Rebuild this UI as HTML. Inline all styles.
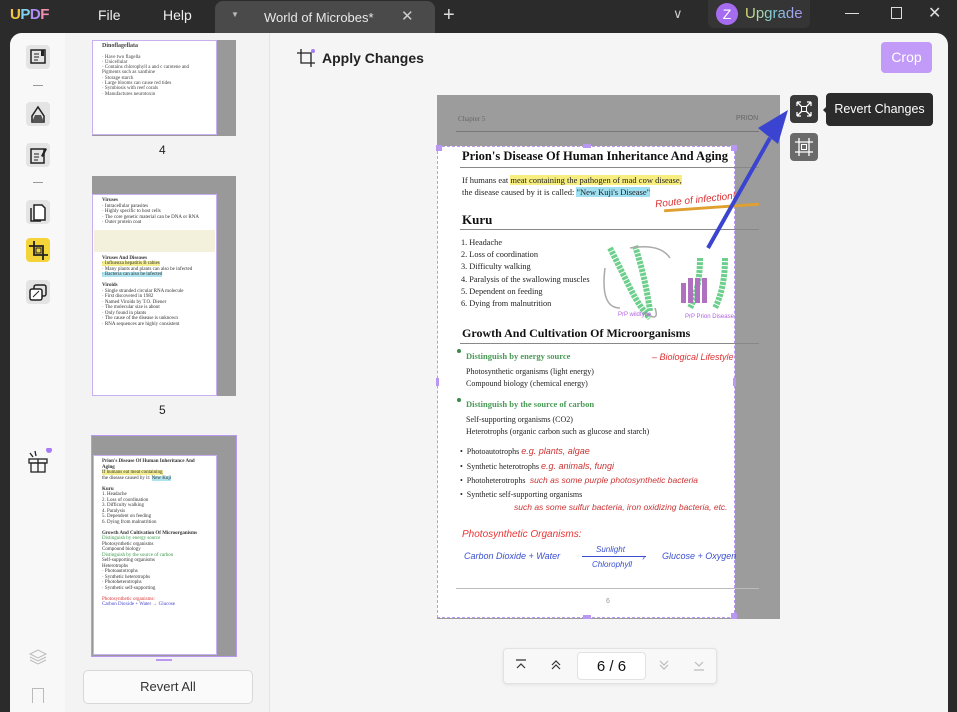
<!DOCTYPE html>
<html><head><meta charset="utf-8">
<style>
*{margin:0;padding:0;box-sizing:border-box}
body{width:957px;height:712px;background:#2b2b2b;font-family:"Liberation Sans",sans-serif;position:relative;overflow:hidden}
.a{position:absolute}
.ser{font-family:"Liberation Serif",serif}
.hw{font-family:"Liberation Sans",sans-serif;font-style:italic}
.ic{position:absolute;left:26px;width:24px;height:24px;border-radius:4px;background:#e4e4e4}
.pl{position:absolute;left:466px;font-size:8px;color:#222}
</style></head><body>
<div class="a" style="left:10px;top:6px;font-weight:bold;font-size:15px;letter-spacing:-0.5px"><span style="color:#f5c542">U</span><span style="color:#7fd3f0">P</span><span style="color:#b08cf5">D</span><span style="color:#f08fb0">F</span></div>
<div class="a" style="left:98px;top:7px;color:#eee;font-size:14px">File</div>
<div class="a" style="left:163px;top:7px;color:#eee;font-size:14px">Help</div>
<div class="a" style="left:215px;top:1px;width:220px;height:32px;background:#4a4a4a;border-radius:8px 8px 0 0"></div>
<div class="a" style="left:231px;top:10px;color:#bbb;font-size:8px">▼</div>
<div class="a" style="left:264px;top:10px;color:#e8e8e8;font-size:13px">World of Microbes*</div>
<div class="a" style="left:401px;top:7px;color:#ccc;font-size:15px">✕</div>
<div class="a" style="left:443px;top:4px;color:#ddd;font-size:20px">+</div>
<div class="a" style="left:673px;top:6px;color:#ccc;font-size:13px">∨</div>
<div class="a" style="left:708px;top:0;width:102px;height:28px;background:#353535;border-radius:0 0 6px 6px"></div>
<div class="a" style="left:716px;top:3px;width:22px;height:22px;border-radius:50%;background:#a66cf0;color:#fff;font-size:14px;text-align:center;line-height:22px">Z</div>
<div class="a" style="left:745px;top:5px;font-size:15px;background:linear-gradient(90deg,#d8e070,#80d0e0,#b090f0);-webkit-background-clip:text;color:transparent">Upgrade</div>
<div class="a" style="left:845px;top:13px;width:14px;height:1px;background:#ddd"></div>
<div class="a" style="left:891px;top:7px;width:11px;height:12px;border:1px solid #ddd"></div>
<div class="a" style="left:928px;top:3px;color:#ddd;font-size:16px">✕</div>
<div class="a" style="left:10px;top:33px;width:938px;height:679px;background:#f5f5f5;border-radius:12px 12px 0 0;overflow:hidden">
 <div class="a" style="left:0;top:0;width:55px;height:679px;background:#f8f8f8"></div>
 <div class="a" style="left:55px;top:0;width:205px;height:679px;background:#f3f3f3;border-right:1px solid #e4e4e4"></div>
</div>
<div class="ic" style="top:45px"><svg width="24" height="24"><rect x="5" y="5" width="14" height="13" fill="none" stroke="#222" stroke-width="1.5"/><path d="M8 9h5M8 12h5M8 15h4" stroke="#222"/><rect x="15" y="5" width="3" height="6" fill="#222"/></svg></div>
<div class="a" style="left:33px;top:85px;width:10px;height:1px;background:#999"></div>
<div class="ic" style="top:102px"><svg width="24" height="24"><path d="M6 20V14l6-9 6 9v6z" fill="none" stroke="#222" stroke-width="1.5"/><path d="M9 13h6l3 7H6z" fill="#555"/></svg></div>
<div class="ic" style="top:143px"><svg width="24" height="24"><rect x="5" y="6" width="13" height="14" fill="none" stroke="#222" stroke-width="1.5"/><path d="M8 11h5M8 14h5M8 17h4" stroke="#222"/><path d="M15 13l4-8 2 1-4 8z" fill="#222"/></svg></div>
<div class="a" style="left:33px;top:182px;width:10px;height:1px;background:#999"></div>
<div class="ic" style="top:200px"><svg width="24" height="24"><path d="M8 5h8l3 3v12H8z" fill="#fff" stroke="#222" stroke-width="1.5"/><path d="M5 8v13h10" fill="none" stroke="#222" stroke-width="1.5"/></svg></div>
<div class="ic" style="top:238px;background:#f5d43a"><svg width="24" height="24"><path d="M8 3v14h14M3 8h14v14" fill="none" stroke="#222" stroke-width="1.8"/><rect x="10" y="10" width="5" height="5" fill="none" stroke="#222"/></svg></div>
<div class="ic" style="top:280px"><svg width="24" height="24"><rect x="8" y="5" width="12" height="11" rx="2" fill="none" stroke="#222" stroke-width="1.5"/><rect x="4" y="9" width="12" height="11" rx="2" fill="#fff" stroke="#222" stroke-width="1.5"/><path d="M7 17l6-6" stroke="#222"/></svg></div>
<div class="a" style="left:26px;top:448px"><svg width="26" height="26"><rect x="3" y="11" width="18" height="4" fill="none" stroke="#222" stroke-width="1.3"/><rect x="5" y="15" width="14" height="9" fill="none" stroke="#222" stroke-width="1.3"/><path d="M12 11v13M4 5l3 4M9 3l1 5" stroke="#222" stroke-width="1.3"/><circle cx="23" cy="2" r="3" fill="#a87cf5"/></svg></div>
<div class="a" style="left:28px;top:646px"><svg width="20" height="20"><path d="M2 8l8-4 8 4-8 4z M2 11l8 4 8-4 M2 14l8 4 8-4" fill="none" stroke="#bbb"/></svg></div>
<div class="a" style="left:32px;top:688px;width:12px;height:15px;border:1.3px solid #bbb;border-bottom:none"></div>
<div class="a" style="left:92px;top:40px;width:144px;height:96px;background:#999"></div>
<div class="a ser" style="left:92px;top:40px;width:125px;height:95px;background:#fff;border:1px solid #c8b0f0;padding:3px 9px;font-size:5px;color:#444;line-height:5.3px"><b style="font-size:6px">Dinoflagellata</b><br><br>· Have two flagella<br>· Unicellular<br>· Contains chlorophyll a and c carotene and Pigments such as xanthine<br>· Storage starch<br>· Large blooms can cause red tides<br>· Symbiosis with reef corals<br>· Manufactures neurotoxin</div>
<div class="a" style="left:159px;top:143px;font-size:12px;color:#222">4</div>
<div class="a" style="left:92px;top:176px;width:144px;height:220px;background:#999"></div>
<div class="a ser" style="left:92px;top:194px;width:125px;height:202px;background:#fff;border:1px solid #c8b0f0;font-size:5px;color:#333;padding:3px 9px;line-height:5.5px"><b>Viruses</b><br>· Intracellular parasites<br>· Highly specific to host cells<br>· The core genetic material can be DNA or RNA<br>· Outer protein coat<div style="height:22px;background:#f3f0dc;margin:4px -8px"></div><b>Viruses And Diseases</b><br><span style="background:#f4ee90">· Influenza hepatitis B rabies</span><br>· Many plants and plants can also be infected<br><span style="background:#aee4f0">· Bacteria can also be infected</span><br><br><b>Viroids</b><br>· Single stranded circular RNA molecule<br>· First discovered in 1982<br>· Named Viroids by T.O. Diener<br>· The molecular size is about<br>· Only found in plants<br>· The cause of the disease is unknown<br>· RNA sequences are highly consistent</div>
<div class="a" style="left:159px;top:403px;font-size:12px;color:#222">5</div>
<div class="a" style="left:91px;top:435px;width:146px;height:222px;background:#999;border:1px solid #b898f0"></div>
<div class="a ser" style="left:93px;top:455px;width:124px;height:200px;background:#fff;border:1px solid #c8b0f0;font-size:5px;color:#333;padding:3px 8px;line-height:5.5px"><b>Prion's Disease Of Human Inheritance And Aging</b><br><span style="background:#f4ee90">If humans eat meat containing</span><br>the disease caused by it: <span style="background:#aee4f0">New Kuji</span><br><br><b>Kuru</b><br>1. Headache<br>2. Loss of coordination<br>3. Difficulty walking<br>4. Paralysis<br>5. Dependent on feeding<br>6. Dying from malnutrition<br><br><b>Growth And Cultivation Of Microorganisms</b><br><span style="color:#3a9a4a">Distinguish by energy source</span><br>Photosynthetic organisms<br>Compound biology<br><span style="color:#3a9a4a">Distinguish by the source of carbon</span><br>Self-supporting organisms<br>Heterotrophs<br>· Photoautotrophs<br>· Synthetic heterotrophs<br>· Photoheterotrophs<br>· Synthetic self-supporting<br><br><span style="color:#d33">Photosynthetic organisms:</span><br><span style="color:#44c">Carbon Dioxide + Water → Glucose</span></div>
<div class="a" style="left:156px;top:659px;width:16px;height:2px;background:#b898f0"></div>
<div class="a" style="left:83px;top:670px;width:170px;height:34px;background:#fafafa;border:1px solid #d8d8d8;border-radius:5px;font-size:13px;color:#333;text-align:center;line-height:32px">Revert All</div>
<div class="a" style="left:296px;top:48px"><svg width="20" height="20"><path d="M5 1v14h14M1 5h14v14" fill="none" stroke="#222" stroke-width="1.3"/><circle cx="17" cy="3" r="2" fill="#a87cf5"/></svg></div>
<div class="a" style="left:322px;top:50px;font-size:14px;font-weight:bold;color:#222">Apply Changes</div>
<div class="a" style="left:881px;top:42px;width:51px;height:31px;background:#c29af8;border-radius:4px;color:#fff;font-size:14px;text-align:center;line-height:31px">Crop</div>
<div class="a" style="left:437px;top:95px;width:343px;height:524px;background:#9c9c9c"></div>
<div class="a ser" style="left:458px;top:115px;font-size:7px;color:#666">Chapter 5</div>
<div class="a" style="left:736px;top:115px;font-size:7px;color:#666">PRION</div>
<div class="a" style="left:456px;top:131px;width:303px;height:1px;background:#777"></div>
<div class="a" style="left:437px;top:146px;width:298px;height:472px;background:#fff;border:1.5px dashed #b898f0"></div>
<div class="a ser" style="left:462px;top:149px;font-size:12.5px;font-weight:bold;color:#111">Prion's Disease Of Human Inheritance And Aging</div>
<div class="a" style="left:460px;top:167px;width:299px;height:1px;background:#888"></div>
<div class="a ser" style="left:462px;top:175px;font-size:8.5px;color:#222">If humans eat <span style="background:#f8ee80">meat containing the pathogen of mad cow disease,</span></div>
<div class="a ser" style="left:462px;top:187px;font-size:8.5px;color:#222">the disease caused by it is called: <span style="background:#9ee0f2">"New Kuji's Disease"</span></div>
<div class="a hw" style="left:655px;top:195px;font-size:10px;color:#d33;transform:rotate(-6deg)">Route of infection!</div>
<div class="a" style="left:664px;top:206px;width:95px;height:3px;background:#e0a030;transform:rotate(-4deg)"></div>
<div class="a ser" style="left:462px;top:212px;font-size:13px;font-weight:bold;color:#111">Kuru</div>
<div class="a" style="left:460px;top:229px;width:299px;height:1px;background:#888"></div>
<div class="a ser" style="left:461px;top:237px;font-size:8.3px;color:#222;line-height:12.2px">1. Headache<br>2. Loss of coordination<br>3. Difficulty walking<br>4. Paralysis of the swallowing muscles<br>5. Dependent on feeding<br>6. Dying from malnutrition</div>
<svg class="a" style="left:600px;top:238px" width="135" height="85"><g fill="none" stroke-width="6" stroke="#6ccf8c" stroke-dasharray="3 1"><path d="M10 10 q10 20 20 40 q10 20 20 30"/><path d="M35 8 q10 30 15 65"/><path d="M100 20 q0 30 -10 50"/><path d="M125 20 q0 30 -10 50"/></g><g fill="none" stroke="#aaa" stroke-width="1.5"><path d="M5 30 q-5 40 15 40 M30 10 q30 -5 40 10 M55 70 q5 15 -10 5"/></g><g fill="#b070c0"><rect x="88" y="40" width="5" height="25"/><rect x="95" y="40" width="5" height="25"/><rect x="102" y="40" width="5" height="25"/><rect x="81" y="45" width="5" height="20"/></g><text x="18" y="78" font-size="6" fill="#b060e0" font-family="Liberation Sans">PrP wildtype</text><text x="85" y="80" font-size="6" fill="#b060e0" font-family="Liberation Sans">PrP Prion Disease</text></svg>
<div class="a ser" style="left:462px;top:326px;font-size:12px;font-weight:bold;color:#111">Growth And Cultivation Of Microorganisms</div>
<div class="a" style="left:460px;top:343px;width:299px;height:1px;background:#888"></div>
<div class="a" style="left:457px;top:349px;width:4px;height:4px;border-radius:50%;background:#3a8a4a"></div>
<div class="a ser" style="left:466px;top:351px;font-size:8.5px;font-weight:bold;color:#4a9a55">Distinguish by energy source</div>
<div class="a hw" style="left:652px;top:352px;font-size:9px;color:#d33">– Biological Lifestyle</div>
<div class="pl ser" style="top:367px">Photosynthetic organisms (light energy)</div>
<div class="pl ser" style="top:379px">Compound biology (chemical energy)</div>
<div class="a" style="left:457px;top:398px;width:4px;height:4px;border-radius:50%;background:#3a8a4a"></div>
<div class="a ser" style="left:466px;top:399px;font-size:8.5px;font-weight:bold;color:#4a9a55">Distinguish by the source of carbon</div>
<div class="pl ser" style="top:415px">Self-supporting organisms (CO2)</div>
<div class="pl ser" style="top:427px">Heterotrophs (organic carbon such as glucose and starch)</div>
<div class="pl ser" style="left:460px;top:446px">•&nbsp; Photoautotrophs <span class="hw" style="color:#c33;font-size:9px">e.g. plants, algae</span></div>
<div class="pl ser" style="left:460px;top:461px">•&nbsp; Synthetic heterotrophs <span class="hw" style="color:#c33;font-size:9px">e.g. animals, fungi</span></div>
<div class="pl ser" style="left:460px;top:475px">•&nbsp; Photoheterotrophs <span class="hw" style="color:#c33;font-size:8.5px">&nbsp;such as some purple photosynthetic bacteria</span></div>
<div class="pl ser" style="left:460px;top:490px">•&nbsp; Synthetic self-supporting organisms</div>
<div class="a hw" style="left:514px;top:502px;font-size:8.5px;color:#c33">such as some sulfur bacteria, iron oxidizing bacteria, etc.</div>
<div class="a hw" style="left:462px;top:529px;font-size:10px;color:#e33">Photosynthetic Organisms:</div>
<div class="a hw" style="left:464px;top:551px;font-size:9px;color:#3a50d0">Carbon Dioxide + Water</div>
<div class="a hw" style="left:596px;top:545px;font-size:8px;color:#3a50d0">Sunlight</div>
<div class="a" style="left:582px;top:556px;width:64px;height:1px;background:#3a50d0"></div>
<div class="a" style="left:642px;top:552px;font-size:9px;color:#3a50d0">›</div>
<div class="a hw" style="left:592px;top:560px;font-size:8px;color:#3a50d0">Chlorophyll</div>
<div class="a hw" style="left:662px;top:551px;font-size:9px;color:#3a50d0">Glucose + Oxygen</div>
<div class="a" style="left:456px;top:588px;width:303px;height:1px;background:#bbb"></div>
<div class="a" style="left:606px;top:598px;font-size:7px;color:#999">6</div>
<div class="a" style="left:436px;top:145px;width:6px;height:6px;background:#b898f0"></div>
<div class="a" style="left:583px;top:144px;width:8px;height:4px;background:#b898f0"></div>
<div class="a" style="left:731px;top:145px;width:6px;height:6px;background:#b898f0"></div>
<div class="a" style="left:436px;top:378px;width:3px;height:8px;background:#b898f0"></div>
<div class="a" style="left:733px;top:378px;width:3px;height:8px;background:#b898f0"></div>
<div class="a" style="left:583px;top:615px;width:8px;height:4px;background:#b898f0"></div>
<div class="a" style="left:731px;top:613px;width:6px;height:6px;background:#b898f0"></div>
<svg class="a" style="left:700px;top:108px" width="90" height="150"><path d="M8 140 L70 30" stroke="#3a44d0" stroke-width="4"/><path d="M88 2 L58 20 L78 36 Z" fill="#3a44d0"/></svg>
<div class="a" style="left:790px;top:95px;width:28px;height:28px;background:#3a3a3a;border-radius:4px"><svg width="28" height="28"><path d="M7 7l5 5M21 7l-5 5M7 21l5-5M21 21l-5-5M7 7h4M7 7v4M21 7h-4M21 7v4M7 21h4M7 21v-4M21 21h-4M21 21v-4" stroke="#fff" stroke-width="1.3" fill="none"/><rect x="11.5" y="11.5" width="5" height="5" fill="none" stroke="#fff"/></svg></div>
<div class="a" style="left:790px;top:133px;width:28px;height:28px;background:#6a6a6a;border-radius:4px"><svg width="28" height="28"><path d="M9 5v18M19 5v18M5 9h18M5 19h18" stroke="#fff" stroke-width="1.3"/><rect x="11.5" y="11.5" width="5" height="5" fill="none" stroke="#fff"/></svg></div>
<div class="a" style="left:818px;top:105px;width:0;height:0;border:5px solid transparent;border-right-color:#2b2b2b"></div>
<div class="a" style="left:826px;top:93px;width:107px;height:33px;background:#2b2b2b;border-radius:4px;color:#fff;font-size:12.5px;text-align:center;line-height:33px">Revert Changes</div>
<div class="a" style="left:503px;top:648px;width:214px;height:36px;background:#f8f8f8;border:1px solid #e2e2e2;border-radius:4px;box-shadow:0 1px 3px rgba(0,0,0,.08)"></div>
<div class="a" style="left:514px;top:658px"><svg width="14" height="14"><path d="M2 2h10M3 10l4-4 4 4" stroke="#333" fill="none" stroke-width="1.2"/></svg></div>
<div class="a" style="left:549px;top:658px"><svg width="14" height="14"><path d="M3 7l4-4 4 4M3 11l4-4 4 4" stroke="#333" fill="none" stroke-width="1.2"/></svg></div>
<div class="a" style="left:577px;top:652px;width:69px;height:28px;background:#fff;border:1px solid #e2e2e2;border-radius:4px;font-size:15px;color:#111;text-align:center;line-height:27px">6 / 6</div>
<div class="a" style="left:657px;top:658px"><svg width="14" height="14"><path d="M3 3l4 4 4-4M3 7l4 4 4-4" stroke="#bbb" fill="none" stroke-width="1.2"/></svg></div>
<div class="a" style="left:692px;top:658px"><svg width="14" height="14"><path d="M3 4l4 4 4-4M2 12h10" stroke="#bbb" fill="none" stroke-width="1.2"/></svg></div>
</body></html>
